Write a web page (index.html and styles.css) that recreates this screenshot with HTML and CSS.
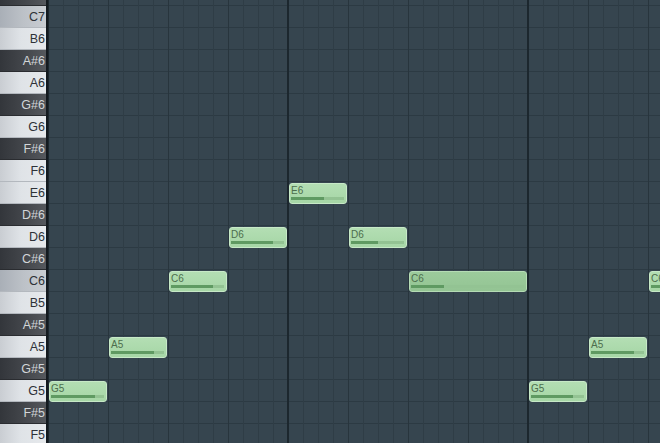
FILE: index.html
```html
<!DOCTYPE html>
<html>
<head>
<meta charset="utf-8">
<link rel="stylesheet" href="styles.css">
</head>
<body>
<div class="roll">
  <div class="keys">
    <div class="key black">C#7</div>
    <div class="key white c">C7</div>
    <div class="key white">B6</div>
    <div class="key black">A#6</div>
    <div class="key white">A6</div>
    <div class="key black">G#6</div>
    <div class="key white">G6</div>
    <div class="key black">F#6</div>
    <div class="key white">F6</div>
    <div class="key white">E6</div>
    <div class="key black">D#6</div>
    <div class="key white">D6</div>
    <div class="key black">C#6</div>
    <div class="key white c">C6</div>
    <div class="key white">B5</div>
    <div class="key black">A#5</div>
    <div class="key white">A5</div>
    <div class="key black">G#5</div>
    <div class="key white">G5</div>
    <div class="key black">F#5</div>
    <div class="key white">F5</div>
  </div>
  <div class="grid">
    <div class="note" style="left:1px;top:381px;width:58px"><span>G5</span><i style="width:44px"></i></div>
    <div class="note" style="left:61px;top:337px;width:58px"><span>A5</span><i style="width:43px"></i></div>
    <div class="note" style="left:121px;top:271px;width:58px"><span>C6</span><i style="width:42px"></i></div>
    <div class="note" style="left:181px;top:227px;width:58px"><span>D6</span><i style="width:42px"></i></div>
    <div class="note" style="left:241px;top:183px;width:58px"><span>E6</span><i style="width:33px"></i></div>
    <div class="note" style="left:301px;top:227px;width:58px"><span>D6</span><i style="width:27px"></i></div>
    <div class="note long" style="left:361px;top:271px;width:118px"><span>C6</span><i style="width:33px"></i></div>
    <div class="note" style="left:481px;top:381px;width:58px"><span>G5</span><i style="width:42px"></i></div>
    <div class="note" style="left:541px;top:337px;width:58px"><span>A5</span><i style="width:43px"></i></div>
    <div class="note" style="left:601px;top:271px;width:58px"><span>C6</span><i style="width:42px"></i></div>
  </div>
</div>
</body>
</html>
```
FILE: styles.css
```css
html, body {
  margin: 0;
  padding: 0;
  width: 660px;
  height: 443px;
  overflow: hidden;
  background: #35444e;
}
.roll {
  display: flex;
  width: 660px;
  height: 443px;
  overflow: hidden;
}
.keys {
  width: 46px;
  flex: none;
  margin-top: -16px;
  display: flex;
  flex-direction: column;
  border-right: 2px solid #141a1f;
}
.key {
  height: 22px;
  box-sizing: border-box;
  flex: none;
  text-align: right;
  padding-right: 1px;
  padding-top: 1px;
  font-family: "Liberation Sans", Arial, sans-serif;
  font-size: 12.5px;
  line-height: 21px;
  overflow: hidden;
}
.key.white {
  background: linear-gradient(to right, #c9cdd2 0%, #dfe3e7 45%, #e6e9ec 100%);
  color: #2e3238;
  border-bottom: 1px solid #b3b8be;
}
.key.white.c {
  background: linear-gradient(to right, #a9afb7 0%, #bcc1c7 50%, #c9cdd2 100%);
}
.key.black {
  background: linear-gradient(to right, #33363b 0%, #44474c 55%, #55585d 100%);
  color: #d2d5d8;
  border-bottom: 1px solid #2a2c30;
}
.grid {
  position: relative;
  flex: 1;
  height: 443px;
  background-color: #36454f;
  background-image:
    linear-gradient(to right, #1c272e 0, #1c272e 2px, transparent 2px),
    linear-gradient(to right, #28353d 0, #28353d 1px, transparent 1px),
    linear-gradient(to right, #2f3d46 0, #2f3d46 1px, transparent 1px),
    linear-gradient(to bottom, #2c3a43 0, #2c3a43 1px, transparent 1px);
  background-size: 240px 100%, 60px 100%, 15px 100%, 100% 22px;
  background-position: -1px 0, 0 0, 0 0, 0 5px;
}
.note {
  position: absolute;
  height: 21px;
  box-sizing: border-box;
  border: 1px solid #c7e9c7;
  border-radius: 3px;
  background: linear-gradient(to bottom, #b3deb3 0%, #a6d6a6 100%);
  font-family: "Liberation Sans", Arial, sans-serif;
  font-size: 10px;
  color: #4d6e4d;
  overflow: hidden;
}
.note.long {
  background: linear-gradient(to bottom, #9ccb9c 0%, #93c493 100%);
  border-color: #b5dcb5;
}
.note span {
  position: absolute;
  left: 1px;
  top: 1px;
  line-height: 11px;
}
.note::after {
  content: "";
  position: absolute;
  left: 1px;
  right: 2px;
  bottom: 3px;
  height: 3px;
  background: #93c393;
}
.note i {
  position: absolute;
  left: 1px;
  bottom: 3px;
  height: 3px;
  background: #5f9a62;
  z-index: 1;
}
```
